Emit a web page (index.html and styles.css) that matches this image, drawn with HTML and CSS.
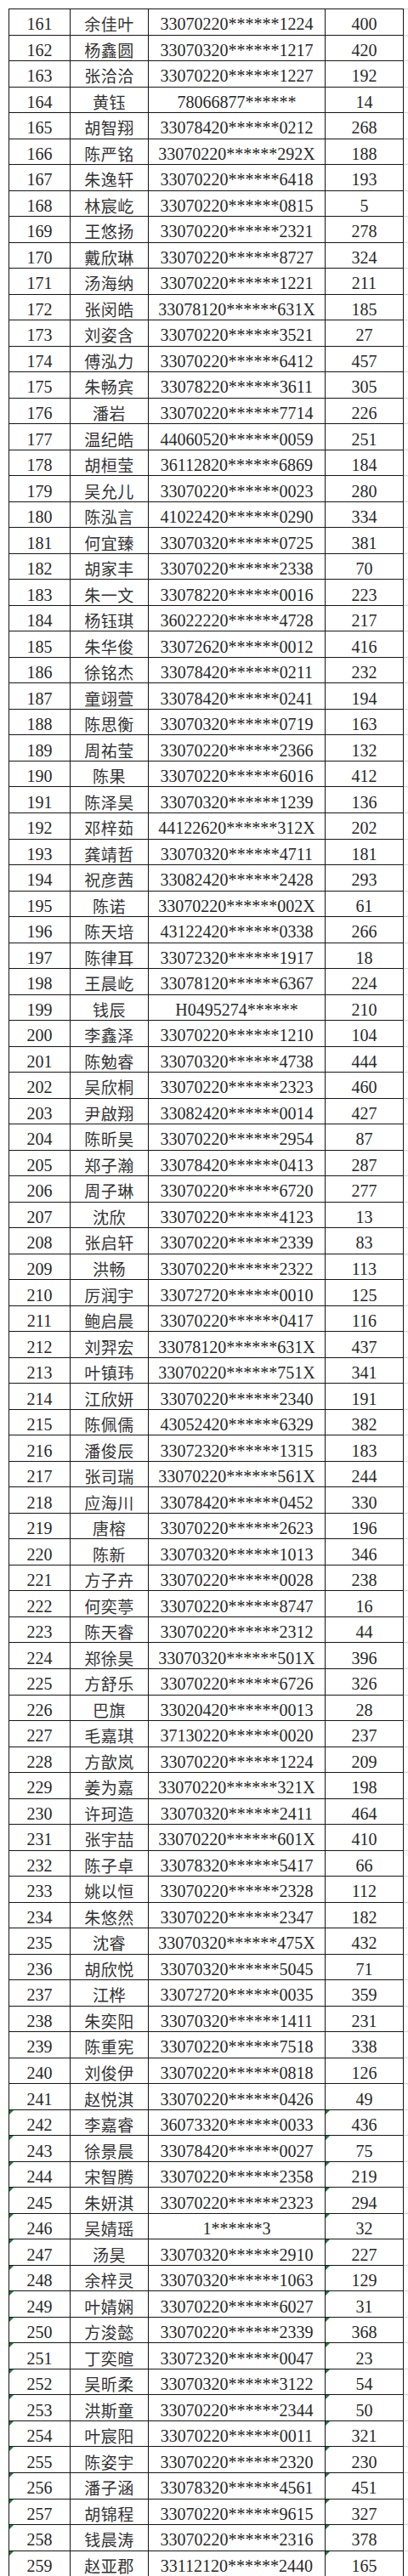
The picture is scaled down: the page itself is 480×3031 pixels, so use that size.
FILE: index.html
```html
<!DOCTYPE html>
<html lang="zh-CN">
<head>
<meta charset="utf-8">
<title>名单</title>
<link rel="stylesheet" href="styles.css">
</head>
<body>
<table class="sheet">
<colgroup><col class="c-no"><col class="c-name"><col class="c-id"><col class="c-score"><col class="c-edge"></colgroup>
<tbody>
<tr><td class="no">161</td><td class="name">余佳叶</td><td class="id">33070220******1224</td><td class="score">400</td><td class="edge"></td></tr>
<tr><td class="no">162</td><td class="name">杨鑫圆</td><td class="id">33070320******1217</td><td class="score">420</td><td class="edge"></td></tr>
<tr><td class="no">163</td><td class="name">张洽洽</td><td class="id">33070220******1227</td><td class="score">192</td><td class="edge"></td></tr>
<tr><td class="no">164</td><td class="name">黄钰</td><td class="id">78066877******</td><td class="score">14</td><td class="edge"></td></tr>
<tr><td class="no">165</td><td class="name">胡智翔</td><td class="id">33078420******0212</td><td class="score">268</td><td class="edge"></td></tr>
<tr><td class="no">166</td><td class="name">陈严铭</td><td class="id">33070220******292X</td><td class="score">188</td><td class="edge"></td></tr>
<tr><td class="no">167</td><td class="name">朱逸轩</td><td class="id">33070220******6418</td><td class="score">193</td><td class="edge"></td></tr>
<tr><td class="no">168</td><td class="name">林宸屹</td><td class="id">33070220******0815</td><td class="score">5</td><td class="edge"></td></tr>
<tr><td class="no">169</td><td class="name">王悠扬</td><td class="id">33070220******2321</td><td class="score">278</td><td class="edge"></td></tr>
<tr><td class="no">170</td><td class="name">戴欣琳</td><td class="id">33070220******8727</td><td class="score">324</td><td class="edge"></td></tr>
<tr><td class="no">171</td><td class="name">汤海纳</td><td class="id">33070220******1221</td><td class="score">211</td><td class="edge"></td></tr>
<tr><td class="no">172</td><td class="name">张闵皓</td><td class="id">33078120******631X</td><td class="score">185</td><td class="edge"></td></tr>
<tr><td class="no">173</td><td class="name">刘姿含</td><td class="id">33070220******3521</td><td class="score">27</td><td class="edge"></td></tr>
<tr><td class="no">174</td><td class="name">傅泓力</td><td class="id">33070220******6412</td><td class="score">457</td><td class="edge"></td></tr>
<tr><td class="no">175</td><td class="name">朱畅宾</td><td class="id">33078220******3611</td><td class="score">305</td><td class="edge"></td></tr>
<tr><td class="no">176</td><td class="name">潘岩</td><td class="id">33070220******7714</td><td class="score">226</td><td class="edge"></td></tr>
<tr><td class="no">177</td><td class="name">温纪皓</td><td class="id">44060520******0059</td><td class="score">251</td><td class="edge"></td></tr>
<tr><td class="no">178</td><td class="name">胡桓莹</td><td class="id">36112820******6869</td><td class="score">184</td><td class="edge"></td></tr>
<tr><td class="no">179</td><td class="name">吴允儿</td><td class="id">33070220******0023</td><td class="score">280</td><td class="edge"></td></tr>
<tr><td class="no">180</td><td class="name">陈泓言</td><td class="id">41022420******0290</td><td class="score">334</td><td class="edge"></td></tr>
<tr><td class="no">181</td><td class="name">何宜臻</td><td class="id">33070320******0725</td><td class="score">381</td><td class="edge"></td></tr>
<tr><td class="no">182</td><td class="name">胡家丰</td><td class="id">33070220******2338</td><td class="score">70</td><td class="edge"></td></tr>
<tr><td class="no">183</td><td class="name">朱一文</td><td class="id">33078220******0016</td><td class="score">223</td><td class="edge"></td></tr>
<tr><td class="no">184</td><td class="name">杨钰琪</td><td class="id">36022220******4728</td><td class="score">217</td><td class="edge"></td></tr>
<tr><td class="no">185</td><td class="name">朱华俊</td><td class="id">33072620******0012</td><td class="score">416</td><td class="edge"></td></tr>
<tr><td class="no">186</td><td class="name">徐铭杰</td><td class="id">33078420******0211</td><td class="score">232</td><td class="edge"></td></tr>
<tr><td class="no">187</td><td class="name">童翊萱</td><td class="id">33078420******0241</td><td class="score">194</td><td class="edge"></td></tr>
<tr><td class="no">188</td><td class="name">陈思衡</td><td class="id">33070320******0719</td><td class="score">163</td><td class="edge"></td></tr>
<tr><td class="no">189</td><td class="name">周祐莹</td><td class="id">33070220******2366</td><td class="score">132</td><td class="edge"></td></tr>
<tr><td class="no">190</td><td class="name">陈果</td><td class="id">33070220******6016</td><td class="score">412</td><td class="edge"></td></tr>
<tr><td class="no">191</td><td class="name">陈泽昊</td><td class="id">33070320******1239</td><td class="score">136</td><td class="edge"></td></tr>
<tr><td class="no">192</td><td class="name">邓梓茹</td><td class="id">44122620******312X</td><td class="score">202</td><td class="edge"></td></tr>
<tr><td class="no">193</td><td class="name">龚靖哲</td><td class="id">33070320******4711</td><td class="score">181</td><td class="edge"></td></tr>
<tr><td class="no">194</td><td class="name">祝彦茜</td><td class="id">33082420******2428</td><td class="score">293</td><td class="edge"></td></tr>
<tr><td class="no">195</td><td class="name">陈诺</td><td class="id">33070220******002X</td><td class="score">61</td><td class="edge"></td></tr>
<tr><td class="no">196</td><td class="name">陈天培</td><td class="id">43122420******0338</td><td class="score">266</td><td class="edge"></td></tr>
<tr><td class="no">197</td><td class="name">陈律耳</td><td class="id">33072320******1917</td><td class="score">18</td><td class="edge"></td></tr>
<tr><td class="no">198</td><td class="name">王晨屹</td><td class="id">33078120******6367</td><td class="score">224</td><td class="edge"></td></tr>
<tr><td class="no">199</td><td class="name">钱辰</td><td class="id">H0495274******</td><td class="score">210</td><td class="edge"></td></tr>
<tr><td class="no">200</td><td class="name">李鑫泽</td><td class="id">33070220******1210</td><td class="score">104</td><td class="edge"></td></tr>
<tr><td class="no">201</td><td class="name">陈勉睿</td><td class="id">33070320******4738</td><td class="score">444</td><td class="edge"></td></tr>
<tr><td class="no">202</td><td class="name">吴欣桐</td><td class="id">33070220******2323</td><td class="score">460</td><td class="edge"></td></tr>
<tr><td class="no">203</td><td class="name">尹啟翔</td><td class="id">33082420******0014</td><td class="score">427</td><td class="edge"></td></tr>
<tr><td class="no">204</td><td class="name">陈昕昊</td><td class="id">33070220******2954</td><td class="score">87</td><td class="edge"></td></tr>
<tr><td class="no">205</td><td class="name">郑子瀚</td><td class="id">33078420******0413</td><td class="score">287</td><td class="edge"></td></tr>
<tr><td class="no">206</td><td class="name">周子琳</td><td class="id">33070220******6720</td><td class="score">277</td><td class="edge"></td></tr>
<tr><td class="no">207</td><td class="name">沈欣</td><td class="id">33070220******4123</td><td class="score">13</td><td class="edge"></td></tr>
<tr><td class="no">208</td><td class="name">张启轩</td><td class="id">33070220******2339</td><td class="score">83</td><td class="edge"></td></tr>
<tr><td class="no">209</td><td class="name">洪畅</td><td class="id">33070220******2322</td><td class="score">113</td><td class="edge"></td></tr>
<tr><td class="no">210</td><td class="name">厉润宇</td><td class="id">33072720******0010</td><td class="score">125</td><td class="edge"></td></tr>
<tr><td class="no">211</td><td class="name">鲍启晨</td><td class="id">33070220******0417</td><td class="score">116</td><td class="edge"></td></tr>
<tr><td class="no">212</td><td class="name">刘羿宏</td><td class="id">33078120******631X</td><td class="score">437</td><td class="edge"></td></tr>
<tr><td class="no">213</td><td class="name">叶镇玮</td><td class="id">33070220******751X</td><td class="score">341</td><td class="edge"></td></tr>
<tr><td class="no">214</td><td class="name">江欣妍</td><td class="id">33070220******2340</td><td class="score">191</td><td class="edge"></td></tr>
<tr><td class="no">215</td><td class="name">陈佩儒</td><td class="id">43052420******6329</td><td class="score">382</td><td class="edge"></td></tr>
<tr><td class="no">216</td><td class="name">潘俊辰</td><td class="id">33072320******1315</td><td class="score">183</td><td class="edge"></td></tr>
<tr><td class="no">217</td><td class="name">张司瑞</td><td class="id">33070220******561X</td><td class="score">244</td><td class="edge"></td></tr>
<tr><td class="no">218</td><td class="name">应海川</td><td class="id">33078420******0452</td><td class="score">330</td><td class="edge"></td></tr>
<tr><td class="no">219</td><td class="name">唐榕</td><td class="id">33070220******2623</td><td class="score">196</td><td class="edge"></td></tr>
<tr><td class="no">220</td><td class="name">陈新</td><td class="id">33070320******1013</td><td class="score">346</td><td class="edge"></td></tr>
<tr><td class="no">221</td><td class="name">方子卉</td><td class="id">33070220******0028</td><td class="score">238</td><td class="edge"></td></tr>
<tr><td class="no">222</td><td class="name">何奕葶</td><td class="id">33070220******8747</td><td class="score">16</td><td class="edge"></td></tr>
<tr><td class="no">223</td><td class="name">陈天睿</td><td class="id">33070220******2312</td><td class="score">44</td><td class="edge"></td></tr>
<tr><td class="no">224</td><td class="name">郑徐昊</td><td class="id">33070320******501X</td><td class="score">396</td><td class="edge"></td></tr>
<tr><td class="no">225</td><td class="name">方舒乐</td><td class="id">33070220******6726</td><td class="score">326</td><td class="edge"></td></tr>
<tr><td class="no">226</td><td class="name">巴旗</td><td class="id">33020420******0013</td><td class="score">28</td><td class="edge"></td></tr>
<tr><td class="no">227</td><td class="name">毛嘉琪</td><td class="id">37130220******0020</td><td class="score">237</td><td class="edge"></td></tr>
<tr><td class="no">228</td><td class="name">方歆岚</td><td class="id">33070220******1224</td><td class="score">209</td><td class="edge"></td></tr>
<tr><td class="no">229</td><td class="name">姜为嘉</td><td class="id">33070220******321X</td><td class="score">198</td><td class="edge"></td></tr>
<tr><td class="no">230</td><td class="name">许珂造</td><td class="id">33070320******2411</td><td class="score">464</td><td class="edge"></td></tr>
<tr><td class="no">231</td><td class="name">张宇喆</td><td class="id">33070220******601X</td><td class="score">410</td><td class="edge"></td></tr>
<tr><td class="no">232</td><td class="name">陈子卓</td><td class="id">33078320******5417</td><td class="score">66</td><td class="edge"></td></tr>
<tr><td class="no">233</td><td class="name">姚以恒</td><td class="id">33070220******2328</td><td class="score">112</td><td class="edge"></td></tr>
<tr><td class="no">234</td><td class="name">朱悠然</td><td class="id">33070220******2347</td><td class="score">182</td><td class="edge"></td></tr>
<tr><td class="no">235</td><td class="name">沈睿</td><td class="id">33070320******475X</td><td class="score">432</td><td class="edge"></td></tr>
<tr><td class="no">236</td><td class="name">胡欣悦</td><td class="id">33070320******5045</td><td class="score">71</td><td class="edge"></td></tr>
<tr><td class="no">237</td><td class="name">江桦</td><td class="id">33072720******0035</td><td class="score">359</td><td class="edge"></td></tr>
<tr><td class="no">238</td><td class="name">朱奕阳</td><td class="id">33070320******1411</td><td class="score">231</td><td class="edge"></td></tr>
<tr><td class="no">239</td><td class="name">陈重宪</td><td class="id">33070220******7518</td><td class="score">338</td><td class="edge"></td></tr>
<tr><td class="no">240</td><td class="name">刘俊伊</td><td class="id">33070220******0818</td><td class="score">126</td><td class="edge"></td></tr>
<tr><td class="no">241</td><td class="name">赵悦淇</td><td class="id">33070220******0426</td><td class="score">49</td><td class="edge"></td></tr>
<tr class="flag"><td class="no">242</td><td class="name">李嘉睿</td><td class="id">36073320******0033</td><td class="score">436</td><td class="edge"></td></tr>
<tr class="flag"><td class="no">243</td><td class="name">徐景晨</td><td class="id">33078420******0027</td><td class="score">75</td><td class="edge"></td></tr>
<tr class="flag"><td class="no">244</td><td class="name">宋智腾</td><td class="id">33070220******2358</td><td class="score">219</td><td class="edge"></td></tr>
<tr class="flag"><td class="no">245</td><td class="name">朱妍淇</td><td class="id">33070220******2323</td><td class="score">294</td><td class="edge"></td></tr>
<tr class="flag"><td class="no">246</td><td class="name">吴婧瑶</td><td class="id">1******3</td><td class="score">32</td><td class="edge"></td></tr>
<tr class="flag"><td class="no">247</td><td class="name">汤昊</td><td class="id">33070320******2910</td><td class="score">227</td><td class="edge"></td></tr>
<tr class="flag"><td class="no">248</td><td class="name">余梓灵</td><td class="id">33070320******1063</td><td class="score">129</td><td class="edge"></td></tr>
<tr class="flag"><td class="no">249</td><td class="name">叶婧娴</td><td class="id">33070220******6027</td><td class="score">31</td><td class="edge"></td></tr>
<tr class="flag"><td class="no">250</td><td class="name">方浚懿</td><td class="id">33070220******2339</td><td class="score">368</td><td class="edge"></td></tr>
<tr class="flag"><td class="no">251</td><td class="name">丁奕暄</td><td class="id">33072320******0047</td><td class="score">23</td><td class="edge"></td></tr>
<tr class="flag"><td class="no">252</td><td class="name">吴昕柔</td><td class="id">33070320******3122</td><td class="score">54</td><td class="edge"></td></tr>
<tr class="flag"><td class="no">253</td><td class="name">洪斯童</td><td class="id">33070220******2344</td><td class="score">50</td><td class="edge"></td></tr>
<tr class="flag"><td class="no">254</td><td class="name">叶宸阳</td><td class="id">33070220******0011</td><td class="score">321</td><td class="edge"></td></tr>
<tr class="flag"><td class="no">255</td><td class="name">陈姿宇</td><td class="id">33070220******2320</td><td class="score">230</td><td class="edge"></td></tr>
<tr class="flag"><td class="no">256</td><td class="name">潘子涵</td><td class="id">33078320******4561</td><td class="score">451</td><td class="edge"></td></tr>
<tr class="flag"><td class="no">257</td><td class="name">胡锦程</td><td class="id">33070220******9615</td><td class="score">327</td><td class="edge"></td></tr>
<tr class="flag"><td class="no">258</td><td class="name">钱晨涛</td><td class="id">33070220******2316</td><td class="score">378</td><td class="edge"></td></tr>
<tr class="flag"><td class="no">259</td><td class="name">赵亚郡</td><td class="id">33112120******2440</td><td class="score">165</td><td class="edge"></td></tr>
</tbody>
</table>
</body>
</html>
```
FILE: styles.css
```css
html, body {
  margin: 0;
  padding: 0;
  background: #ffffff;
}

body {
  padding: 10px 0 0 10px;
  overflow: hidden;
}

.sheet {
  border-collapse: collapse;
  table-layout: fixed;
  width: 470px;
  font-family: "Liberation Serif", "Noto Sans CJK SC", serif;
  font-size: 20px;
  color: #282828;
}

.c-no { width: 72px; }
.c-name { width: 92px; }
.c-id { width: 208px; }
.c-score { width: 92px; }
.c-edge { width: 6px; }

.sheet tr {
  height: 30.53px;
}

.sheet td {
  position: relative;
  padding: 5px 0 0 0;
  border: 1px solid #161616;
  text-align: center;
  vertical-align: middle;
  line-height: 22px;
  white-space: nowrap;
  overflow: hidden;
}

.sheet td.name {
  font-family: "Noto Sans CJK SC", sans-serif;
  font-size: 19px;
  letter-spacing: 0.5px;
  color: #333333;
}

.sheet td.edge {
  border-top: 1px solid #d4d4d4;
  border-bottom: 1px solid #d4d4d4;
  border-right: 1px solid #dddddd;
  border-left: none;
}

.sheet tr.flag td.no::before,
.sheet tr.flag td.score::before {
  content: "";
  position: absolute;
  left: 0;
  top: 0;
  width: 0;
  height: 0;
  border-top: 5px solid #207a3a;
  border-right: 5px solid transparent;
}
```
